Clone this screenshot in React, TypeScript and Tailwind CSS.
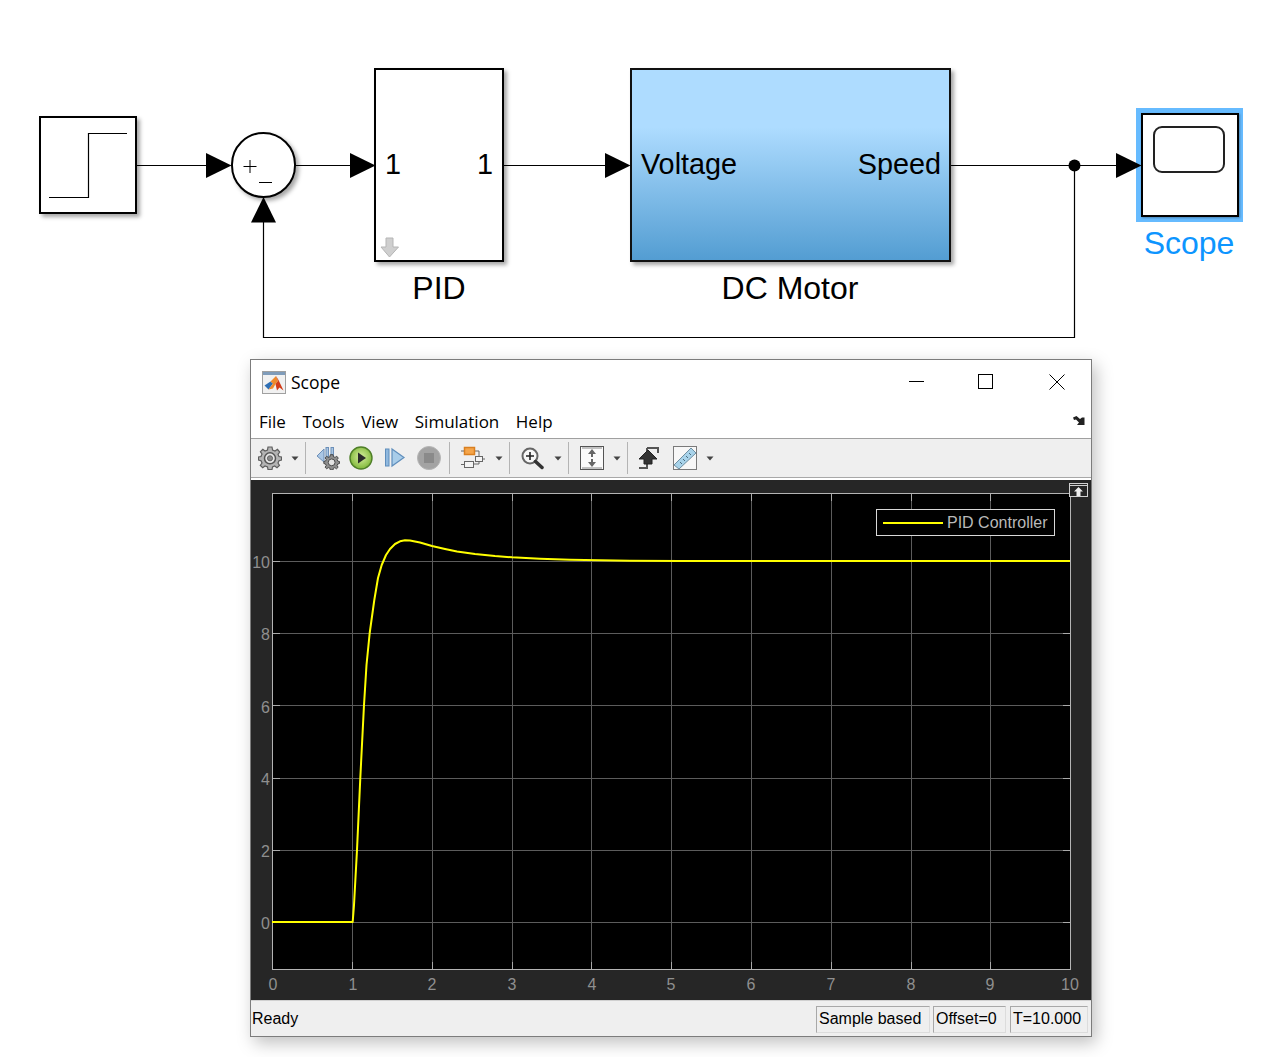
const curve =
  "272,922 352.700,922 354,905 357,850 360.300,778 364,705 366.500,665 369.700,633 374.300,600 378,578 381.700,565 386,555 390,549 395,544 400,541.300 405,540.300 410,540.500 420,542.500 432,546 445,549 457,551.500 475,554 495,556 512,557.300 540,558.800 570,559.800 600,560.300 630,560.700 680,561 1070,561";

const xTicks = [352, 432, 512, 591, 671, 751, 831, 911, 990];
const yTicks = [922, 850, 778, 705, 633, 561];
const xLabels = [273, 353, 432, 512, 592, 671, 751, 831, 911, 990, 1070];
const yLabels = [
  { y: 923, text: "0" },
  { y: 851, text: "2" },
  { y: 779, text: "4" },
  { y: 707, text: "6" },
  { y: 634, text: "8" },
  { y: 562, text: "10" },
];

function Wires() {
  return (
    <svg className="absolute left-0 top-0" width="1282" height="359" viewBox="0 0 1282 359">
      <g fill="none" stroke="#000" strokeWidth="1.2">
        <path d="M137 165.500H210" />
        <path d="M296 165.500H354" />
        <path d="M504 165.500H610" />
        <path d="M951 165.500H1120" />
        <path d="M1074.500 165.500V337.500H263.500V220" />
      </g>
      <circle cx="1074.500" cy="165.500" r="6" fill="#000" />
      <path d="M206 153L231.500 165.500L206 178Z" />
      <path d="M350 153L375.500 165.500L350 178Z" />
      <path d="M605 153L630.500 165.500L605 178Z" />
      <path d="M1116 153L1141.500 165.500L1116 178Z" />
      <path d="M251 222.500L263.500 197L276 222.500Z" />
    </svg>
  );
}

function Diagram() {
  return (
    <div className="relative h-[359px] w-full font-['Liberation_Sans',sans-serif] text-black">
      {/* Step */}
      <div className="absolute left-[39px] top-[116px] h-[98px] w-[98px] border-2 border-black bg-white shadow-[3px_3px_4px_rgba(0,0,0,0.35)]">
        <svg width="94" height="94" viewBox="41 118 94 94">
          <path d="M49 197.500H88.500V133.500H127" fill="none" stroke="#000" strokeWidth="1.2" />
        </svg>
      </div>

      {/* Sum */}
      <div className="absolute left-[231px] top-[132px] h-[66px] w-[65px] rounded-full border-2 border-black bg-white shadow-[3px_3px_4px_rgba(0,0,0,0.35)]">
        <svg width="61" height="62" viewBox="233 134 61 62">
          <path d="M243.500 166.500H256.500M250 160V173M259 182.500H272" fill="none" stroke="#000" strokeWidth="1" />
        </svg>
      </div>

      {/* PID */}
      <div className="absolute left-[374px] top-[68px] h-[194px] w-[130px] border-2 border-black bg-white shadow-[3px_3px_4px_rgba(0,0,0,0.35)]">
        <div className="flex items-center justify-between pl-[9px] pr-[9px] pt-[77px] text-[28.800px] leading-[34px]">
          <span>1</span>
          <span>1</span>
        </div>
        <svg className="absolute bottom-[1px] left-[4px]" width="20" height="22" viewBox="0 0 20 22">
          <path d="M6 1H13V10H18.500L9.500 20L1 10H6Z" fill="#cfcfcf" stroke="#b5b5b5" strokeWidth="1" />
        </svg>
      </div>
      <div className="absolute left-[374px] top-[270px] w-[130px] text-center text-[32px] leading-[37px]">PID</div>

      {/* DC Motor */}
      <div className="absolute left-[630px] top-[68px] flex h-[194px] w-[321px] items-center justify-between border-2 border-[#111] bg-[linear-gradient(to_bottom,#aedcff_0%,#aedcff_30%,#539dd2_100%)] pb-[2px] pl-[9px] pr-[8px] text-[28.800px] leading-[34px] shadow-[3px_3px_4px_rgba(0,0,0,0.35)]">
        <span>Voltage</span>
        <span>Speed</span>
      </div>
      <div className="absolute left-[629px] top-[270px] w-[322px] text-center text-[32px] leading-[37px]">DC Motor</div>

      {/* Scope */}
      <div className="absolute left-[1136px] top-[108px] h-[114px] w-[107px] border-[5px] border-r-[4px] border-[#66bbff] bg-white">
        <div className="h-full w-full border-[2.500px] border-black bg-white pl-[10px] pt-[11px] shadow-[1px_1px_2px_rgba(0,0,0,0.3)]">
          <div className="h-[47px] w-[72px] rounded-[9px] border-2 border-[#222] bg-white" />
        </div>
      </div>
      <div className="absolute left-[1136px] top-[225px] w-[106px] text-center text-[32px] leading-[37px] text-[#0d95ff]">Scope</div>

      <Wires />
    </div>
  );
}

function MatlabIcon() {
  return (
    <svg width="24" height="24" viewBox="0 0 24 24">
      <rect x="0.500" y="0.500" width="23" height="22" fill="#f1f1f1" stroke="#a0a0a0" />
      <rect x="1" y="1" width="22" height="3" fill="#7f9cba" />
      <path d="M2.500 14.500L8.500 10.500L11 12.500L6.500 18.500Z" fill="#2f6fb4" />
      <path d="M8.500 10.500L14 5L16 10L13.500 13L11 17.500L6.500 18.500L11 12.500Z" fill="#ef8a2c" />
      <path d="M14 5L16.500 9L21.500 19.500L17.500 16.500L15 19.500L13.500 13L16 10Z" fill="#d23c1a" />
    </svg>
  );
}

function Caret() {
  return (
    <svg width="8" height="5" viewBox="0 0 8 5">
      <path d="M0.500 0.500H7.500L4 4.500Z" fill="#444" />
    </svg>
  );
}

function Sep() {
  return <div className="h-[32px] w-px bg-[#b4b4b4]" />;
}

function GearIcon({ size = 24 }: { size?: number }) {
  return (
    <svg width={size} height={size} viewBox="0 0 24 24">
      <path
        d="M10 1H14L14.600 4L17 5L19.500 3.300L21.700 6L20 8.400L21 10.500L23.500 11V14L21 14.700L20 17L21.500 19.500L19 21.800L16.700 20L14.500 21L14 23.500H10L9.500 21L7 20L4.700 21.700L2.300 19.400L4 17L3 14.700L0.500 14V11L3 10.500L4 8L2.400 5.700L4.800 3.300L7 5L9.500 4Z"
        fill="#b4b4b4"
        stroke="#5e5e5e"
        strokeWidth="1.200"
      />
      <circle cx="12" cy="12.300" r="5.500" fill="#e8e8e8" stroke="#555" strokeWidth="1.500" />
      <circle cx="12" cy="12.300" r="2.600" fill="#8a8a8a" stroke="#555" strokeWidth="0.800" />
    </svg>
  );
}

function BackIcon() {
  return (
    <svg width="24" height="24" viewBox="0 0 24 24">
      <path d="M1 10L8 3V16Z" fill="#a9c6e4" stroke="#6c8fb8" strokeWidth="1" />
      <rect x="10" y="1.500" width="2.500" height="11" fill="#a9c6e4" stroke="#6c8fb8" strokeWidth="1" />
      <rect x="15" y="1.500" width="2.500" height="10" fill="#a9c6e4" stroke="#6c8fb8" strokeWidth="1" />
      <g transform="translate(7.500 8) scale(0.680)">
        <path
          d="M10 1H14L14.600 4L17 5L19.500 3.300L21.700 6L20 8.400L21 10.500L23.500 11V14L21 14.700L20 17L21.500 19.500L19 21.800L16.700 20L14.500 21L14 23.500H10L9.500 21L7 20L4.700 21.700L2.300 19.400L4 17L3 14.700L0.500 14V11L3 10.500L4 8L2.400 5.700L4.800 3.300L7 5L9.500 4Z"
          fill="#8e8e8e"
          stroke="#444"
          strokeWidth="1.400"
        />
        <circle cx="12" cy="12.300" r="5" fill="#e4e4e4" stroke="#444" strokeWidth="1.400" />
      </g>
    </svg>
  );
}

function PlayIcon() {
  return (
    <svg width="24" height="24" viewBox="0 0 24 24">
      <defs>
        <radialGradient id="play" cx="50%" cy="45%" r="60%">
          <stop offset="0%" stopColor="#d8f0a0" />
          <stop offset="100%" stopColor="#77b22f" />
        </radialGradient>
      </defs>
      <circle cx="12" cy="12" r="11" fill="url(#play)" stroke="#4e7f28" strokeWidth="1.400" />
      <path d="M9 6.500L17 12L9 17.500Z" fill="#2b2b2b" />
    </svg>
  );
}

function StepIcon() {
  return (
    <svg width="22" height="22" viewBox="0 0 22 22">
      <rect x="1.500" y="2" width="3.500" height="17" fill="#8fb8de" stroke="#5f8ebc" />
      <path d="M8 2L20 10.500L8 19Z" fill="#a9cde9" stroke="#5f8ebc" strokeWidth="1.200" />
    </svg>
  );
}

function StopIcon() {
  return (
    <svg width="24" height="24" viewBox="0 0 24 24">
      <circle cx="12" cy="12" r="11.500" fill="#a3a3a3" stroke="#b5b5b5" />
      <rect x="7" y="7" width="10" height="10" fill="#8a8a8a" />
    </svg>
  );
}

function ModelIcon() {
  return (
    <svg width="26" height="26" viewBox="0 0 26 26">
      <path d="M15 6H19V11M14 19H19V17" fill="none" stroke="#666" />
      <rect x="4.500" y="2.500" width="10" height="7" fill="#f5a54a" stroke="#d97f20" strokeWidth="1.500" />
      <rect x="4.500" y="16.500" width="9" height="6" fill="#f4f4f4" stroke="#666" />
      <rect x="15.500" y="11.500" width="7" height="5" fill="#f4f4f4" stroke="#666" />
      <path d="M1 6H4M1 19.500H4M23 14H25" stroke="#666" fill="none" />
    </svg>
  );
}

function ZoomIcon() {
  return (
    <svg width="24" height="24" viewBox="0 0 24 24">
      <circle cx="10" cy="10" r="7.500" fill="#f7f7f7" stroke="#666" strokeWidth="2" />
      <path d="M6 10H14M10 6V14" stroke="#222" strokeWidth="1.600" />
      <path d="M15.500 15.500L22 21.500" stroke="#333" strokeWidth="3.500" strokeLinecap="round" />
    </svg>
  );
}

function AutoscaleIcon() {
  return (
    <svg width="24" height="24" viewBox="0 0 24 24">
      <rect x="0.500" y="0.500" width="23" height="23" fill="#fbfbfb" stroke="#555" />
      <path d="M12 3L16 8H13V11H11V8H8Z" fill="#666" />
      <path d="M12 21L16 16H13V13H11V16H8Z" fill="#666" />
      <path d="M2 2H22M2 22H22" stroke="#888" />
    </svg>
  );
}

function TriggerIcon() {
  return (
    <svg width="22" height="24" viewBox="0 0 22 24">
      <path d="M1 22H9V8M9 2H20V7" fill="none" stroke="#555" strokeWidth="2" />
      <path d="M9 2V7" stroke="#555" strokeWidth="2" />
      <path d="M10 4L19 13H14V18H6V13H1Z" fill="#333" stroke="#222" />
    </svg>
  );
}

function RulerIcon() {
  return (
    <svg width="24" height="24" viewBox="0 0 24 24">
      <rect x="0.500" y="0.500" width="23" height="23" fill="#f7f7f7" stroke="#7a7a7a" />
      <path d="M1 19L18 2L23 7L6 23Z" fill="#a8d3ea" stroke="#6f8ea0" />
      <path d="M7 16L9 18M10 13L12 15M13 10L15 12M16 7L18 9" stroke="#4b6c80" />
    </svg>
  );
}

function Toolbar() {
  return (
    <div className="flex h-[38px] items-center bg-[#efefef] pl-[7px]">
      <GearIcon />
      <div className="ml-[9px]"><Caret /></div>
      <div className="ml-[6px]"><Sep /></div>
      <div className="ml-[10px]"><BackIcon /></div>
      <div className="ml-[9px]"><PlayIcon /></div>
      <div className="ml-[11px]"><StepIcon /></div>
      <div className="ml-[11px]"><StopIcon /></div>
      <div className="ml-[8px]"><Sep /></div>
      <div className="ml-[10px]"><ModelIcon /></div>
      <div className="ml-[9px]"><Caret /></div>
      <div className="ml-[6px]"><Sep /></div>
      <div className="ml-[10px]"><ZoomIcon /></div>
      <div className="ml-[10px]"><Caret /></div>
      <div className="ml-[6px]"><Sep /></div>
      <div className="ml-[11px]"><AutoscaleIcon /></div>
      <div className="ml-[9px]"><Caret /></div>
      <div className="ml-[6px]"><Sep /></div>
      <div className="ml-[10px]"><TriggerIcon /></div>
      <div className="ml-[13px]"><RulerIcon /></div>
      <div className="ml-[9px]"><Caret /></div>
    </div>
  );
}

function Plot() {
  return (
    <div className="relative h-[520px] bg-[#262626]">
      <svg
        className="block"
        width="840"
        height="520"
        viewBox="251 480 840 520"
        fontFamily="'Liberation Sans', sans-serif"
        fontSize="16"
        fill="#8f8f8f"
      >
        <rect x="272.500" y="493.500" width="798" height="476" fill="#000" />
        <g stroke="#5c5c5c" strokeWidth="1">
          {xTicks.map((x) => (
            <path key={x} d={`M${x + 0.5} 494V969`} />
          ))}
          {yTicks.map((y) => (
            <path key={y} d={`M273 ${y + 0.5}H1070`} />
          ))}
        </g>
        <g stroke="#aaaaaa" strokeWidth="1">
          {xTicks.map((x) => (
            <path key={x} d={`M${x + 0.5} 494V501M${x + 0.5} 962V969`} />
          ))}
          {yTicks.map((y) => (
            <path key={y} d={`M273 ${y + 0.5}H280M1063 ${y + 0.5}H1070`} />
          ))}
        </g>
        <rect x="272.500" y="493.500" width="798" height="476" fill="none" stroke="#b4b4b4" />
        <polyline points={curve} fill="none" stroke="#ffff00" strokeWidth="2" strokeLinejoin="round" />
        {xLabels.map((x, i) => (
          <text key={x} x={x} y="990" textAnchor="middle">
            {i}
          </text>
        ))}
        {yLabels.map((l) => (
          <text key={l.text} x="270" y={l.y + 6} textAnchor="end">
            {l.text}
          </text>
        ))}
      </svg>

      {/* legend */}
      <div className="absolute left-[625px] top-[29px] flex h-[27px] w-[179px] items-center border border-[#d8d8d8] bg-black pl-[6px] font-['Liberation_Sans',sans-serif] text-[16px] text-[#b9b9b9]">
        <div className="h-[2px] w-[60px] bg-[#ffff00]" />
        <span className="ml-[4px]">PID Controller</span>
      </div>

      {/* undock button */}
      <div className="absolute left-[818px] top-[3px] h-[14px] w-[19px] border border-[#d0d0d0] bg-[#262626]">
        <svg width="17" height="12" viewBox="0 0 17 12" className="block">
          <path d="M0 1.500H17" stroke="#d0d0d0" />
          <path d="M8.500 3L13 7.500H10.500V12H6.500V7.500H4Z" fill="#ededed" />
        </svg>
      </div>
    </div>
  );
}

function StatusCell({ w, ml, text }: { w: string; ml: string; text: string }) {
  return (
    <div className={`${w} ${ml} flex h-[27px] items-center border border-t-[#a8a8a8] border-l-[#a8a8a8] border-r-[#dcdcdc] border-b-[#dcdcdc] pl-[2px]`}>
      {text}
    </div>
  );
}

function ScopeWindow() {
  return (
    <div className="ml-[250px] flex h-[678px] w-[842px] flex-col border border-[#7c7c7c] bg-white shadow-[4px_6px_16px_rgba(0,0,0,0.25)]">
      {/* title bar */}
      <div className="flex h-[45px] items-center pl-[11px] font-['Open_Sans',sans-serif] text-[17.500px] text-black">
        <MatlabIcon />
        <span className="ml-[5px]">Scope</span>
        <div className="ml-auto mb-[2px] flex items-center">
          <svg width="16" height="16" viewBox="0 0 16 16"><path d="M0 7.500H15" stroke="#000" /></svg>
          <svg className="ml-[53px]" width="16" height="16" viewBox="0 0 16 16"><rect x="0.500" y="0.500" width="14" height="14" fill="none" stroke="#000" /></svg>
          <svg className="ml-[55px] mr-[26px]" width="16" height="16" viewBox="0 0 16 16"><path d="M0.500 0.500L15.500 15.500M15.500 0.500L0.500 15.500" stroke="#000" /></svg>
        </div>
      </div>

      {/* menu bar */}
      <div className="relative flex h-[34px] items-center gap-[16.500px] border-b border-[#a0a0a0] pl-[8px] font-['Open_Sans',sans-serif] text-[17px] text-black">
        <span>File</span>
        <span>Tools</span>
        <span>View</span>
        <span>Simulation</span>
        <span>Help</span>
        <svg className="absolute right-[6px] top-[11px]" width="12" height="10" viewBox="0 0 12 10">
          <path d="M0 1.500L3.500 0L7 3L9 1.500H11.500V9H4L6 6.500L3 3.500L1 4Z" fill="#222" />
        </svg>
      </div>

      <Toolbar />
      <div className="h-[3px] border-t border-[#a8a8a8] bg-white" />
      <Plot />

      {/* status bar */}
      <div className="flex flex-1 items-center border-t border-[#d0d0d0] bg-[#efefef] pl-px pr-[3px] pt-[1px] font-['Liberation_Sans',sans-serif] text-[16px] text-black">
        <span>Ready</span>
        <div className="ml-auto flex items-center">
          <StatusCell w="w-[114px]" ml="ml-0" text="Sample based" />
          <StatusCell w="w-[73px]" ml="ml-[3px]" text="Offset=0" />
          <StatusCell w="w-[78px]" ml="ml-[4px]" text="T=10.000" />
        </div>
      </div>
    </div>
  );
}

export default function App() {
  return (
    <div className="h-[1057px] w-[1282px] overflow-hidden bg-white">
      <Diagram />
      <ScopeWindow />
    </div>
  );
}
